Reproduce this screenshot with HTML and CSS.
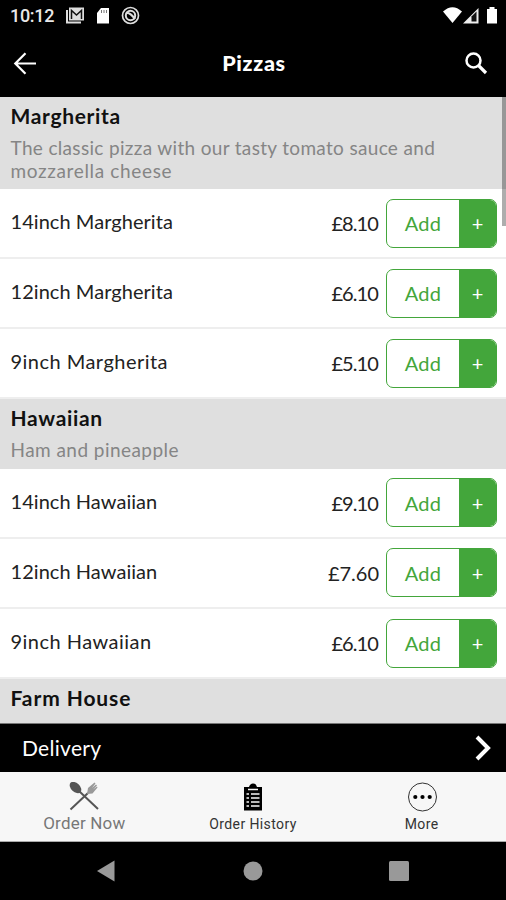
FILE: index.html
```html
<!DOCTYPE html>
<html lang="en">
<head>
<meta charset="utf-8">
<title>Pizzas</title>
<link rel="stylesheet" href="styles.css">
</head>
<body>
<div class="app">
  <div class="status">
    <span class="clock">10:12</span>
    <svg class="notices" width="76" height="20" viewBox="0 0 76 20">
      <path d="M2 4v12.500h14" fill="none" stroke="#ddd" stroke-width="2"/>
      <path d="M4 1.500h15v13H4z" fill="#ddd"/>
      <path d="M6.500 13V4.500l5 4.500 5-4.500V13" fill="none" stroke="#111" stroke-width="1.500"/>
      <path d="M36 2h8v15.500H32V7z" fill="#fff"/>
      <path d="M36.500 4v3M39 4v3M41.500 4v3" stroke="#777" stroke-width="1"/>
      <circle cx="65.500" cy="9.500" r="8" fill="none" stroke="#ddd" stroke-width="1.700"/>
      <circle cx="65.500" cy="9.500" r="4.700" fill="none" stroke="#ddd" stroke-width="2"/>
      <path d="M61 7q4-1 9 6" fill="none" stroke="#ddd" stroke-width="2.200"/>
    </svg>
    <svg class="signals" width="56" height="20" viewBox="0 0 56 20">
      <path d="M0 5.500Q9.500-3 19 5.500L9.500 17z" fill="#fff"/>
      <path d="M20 17.500L35.500 2v15.500z" fill="#eee"/>
      <path d="M28.500 15.500v-5l5-5v10z" fill="#111"/>
      <path d="M44 3h2.500V1h5v2H54v14.500H44z" fill="#fff"/>
    </svg>
  </div>
  <div class="bar">
    <svg width="24" height="24" viewBox="0 0 24 24" fill="none" stroke="#fff" stroke-width="2.200"><path d="M23 12.500H2M12.500 2.300L2.300 12.500l10.200 10.200"/></svg>
    <h1 class="title">Pizzas</h1>
    <svg width="24" height="24" viewBox="0 0 24 24" fill="none" stroke="#fff"><circle cx="9.500" cy="9.500" r="7" stroke-width="2.500"/><path d="M14.500 14.500l7.500 7.500" stroke-width="3.200"/></svg>
  </div>
  <div class="menu">
    <div class="group tall"><h2>Margherita</h2><p><span class="snug">The classic pizza with our tasty tomato sauce and</span><br><span class="loose">mozzarella cheese</span></p></div>
    <div class="row"><span class="name">14inch Margherita</span><span class="price">£8.10</span><div class="button"><span class="add">Add</span><span class="plus">+</span></div></div>
    <div class="row"><span class="name">12inch Margherita</span><span class="price">£6.10</span><div class="button"><span class="add">Add</span><span class="plus">+</span></div></div>
    <div class="row"><span class="name single">9inch Margherita</span><span class="price">£5.10</span><div class="button"><span class="add">Add</span><span class="plus">+</span></div></div>
    <div class="group"><h2>Hawaiian</h2><p>Ham and pineapple</p></div>
    <div class="row"><span class="name">14inch Hawaiian</span><span class="price">£9.10</span><div class="button"><span class="add">Add</span><span class="plus">+</span></div></div>
    <div class="row"><span class="name">12inch Hawaiian</span><span class="price wide">£7.60</span><div class="button"><span class="add">Add</span><span class="plus">+</span></div></div>
    <div class="row"><span class="name single">9inch Hawaiian</span><span class="price">£6.10</span><div class="button"><span class="add">Add</span><span class="plus">+</span></div></div>
    <div class="group"><h2 class="airy">Farm House</h2></div>
    <div class="scroll"></div>
  </div>
  <div class="delivery"><span>Delivery</span><svg width="18" height="26" viewBox="0 0 18 26" fill="none" stroke="#fff" stroke-width="4"><path d="M3 2l11 11L3 24"/></svg></div>
  <div class="tabs">
    <div class="tab now">
      <svg width="30" height="30" viewBox="0 0 30 30"><path d="M10 9l19 18M19 11L1.500 27.500" stroke="#555" stroke-width="2"/><ellipse cx="6.500" cy="5.500" rx="6.800" ry="4.400" transform="rotate(43 6.500 5.500)" fill="#555"/><path d="M18 12l1-6 6.500-5.500 1 1-3.500 4.500 4-3.500 1 1-4 4 4-3 .5 1-5 6z" fill="#999"/></svg>
      <span>Order Now</span>
    </div>
    <div class="tab">
      <svg width="30" height="30" viewBox="0 0 30 30"><path d="M6 5h5q1-3.500 4-3.500t4 3.500h5v23.500H6z" fill="#000"/><path d="M10 7.500h10M8.500 12H11M13 12h8.500M8.500 16H11M13 16h8.500M8.500 20H11M13 20h8.500M8.500 24H11M13 24h8.500" stroke="#f7f7f7" stroke-width="1.500"/></svg>
      <span>Order History</span>
    </div>
    <div class="tab">
      <svg width="30" height="30" viewBox="0 0 30 30"><circle cx="15.500" cy="15" r="14" fill="none" stroke="#333"/><circle cx="8.300" cy="15" r="2.100"/><circle cx="15.500" cy="15" r="2.100"/><circle cx="22.700" cy="15" r="2.100"/></svg>
      <span>More</span>
    </div>
  </div>
  <div class="nav">
    <svg width="20" height="22" viewBox="0 0 20 22"><path d="M1 11L18.500.5v21z" fill="#999"/></svg>
    <svg width="20" height="20" viewBox="0 0 20 20"><circle cx="10" cy="10" r="9.500" fill="#999"/></svg>
    <svg width="20" height="20" viewBox="0 0 20 20"><rect width="20" height="20" rx="1.500" fill="#999"/></svg>
  </div>
</div>
</body>
</html>
```

FILE: styles.css
```css
* { box-sizing: border-box; }
body { margin: 0; background: #000; }
.app { width: 506px; height: 900px; display: flex; flex-direction: column; overflow: hidden; font-family: Lato, "Liberation Sans", sans-serif; }
svg { display: block; flex: none; }
.status { height: 32px; display: flex; align-items: flex-start; padding: 6px 8px 0 10px; color: #e8e8e8; }
.clock { width: 55px; font: 500 18px/20px Roboto, sans-serif; letter-spacing: -.3px; }
.signals { margin-left: auto; margin-right: -1px; }
.bar { height: 65px; display: flex; align-items: center; justify-content: space-between; padding: 0 18px 3px 13px; color: #fff; }
.title { margin: 0; padding-left: 7px; font-size: 21.500px; font-weight: 900; letter-spacing: .7px; }
.menu { height: 627px; position: relative; overflow: hidden; background: #fff; border-bottom: 1px solid #777; }
.group { height: 69.500px; background: #dfdfdf; padding: 7px 10.500px 0; }
.tall { height: 92px; }
h2 { margin: 0; font-size: 21px; line-height: 24px; font-weight: 700; color: #111; letter-spacing: .65px; }
.airy { letter-spacing: .9px; }
p { margin: 8px 0 0; font-size: 19px; line-height: 23px; color: #858585; white-space: nowrap; letter-spacing: .45px; }
.snug { letter-spacing: .33px; }
.loose { letter-spacing: .65px; }
.row { height: 70.100px; border-bottom: 2px solid #eee; display: flex; align-items: center; padding: 0 9px 0 10.500px; color: #222; font-size: 20px; }
.name { flex: 1; letter-spacing: .05px; padding-bottom: 4px; }
.single { letter-spacing: .47px; }
.price { margin-right: 7px; letter-spacing: -.9px; }
.wide { letter-spacing: 0; }
.price:not(.wide) { padding-right: 1px; }
.button { width: 111px; height: 49px; border: 1px solid #43a63b; border-radius: 7px; display: flex; overflow: hidden; color: #43a63b; }
.add, .plus { display: flex; align-items: center; justify-content: center; }
.add { flex: 1; letter-spacing: .3px; }
.plus { width: 37px; background: #43a63b; color: #fff; }
.scroll { position: absolute; top: 0; right: 0; width: 4px; height: 129px; background: rgba(0,0,0,.32); }
.delivery { height: 48px; background: #000; color: #fff; display: flex; align-items: center; justify-content: space-between; padding: 0 14px 0 22px; font-size: 21px; letter-spacing: .3px; }
.delivery span { padding-bottom: 2px; }
.tabs { height: 70px; background: #f7f7f7; display: grid; grid-template-columns: 1fr 1fr 1fr; border-bottom: 1px solid #aaa; }
.tab { display: flex; flex-direction: column; align-items: center; padding-top: 10px; color: #333; font: 14px/18px Roboto, sans-serif; letter-spacing: .4px; }
.tab span { margin-top: 3px; }
.now { color: #777; font-size: 17px; letter-spacing: .2px; }
.now span { margin-top: 2px; }
.nav { height: 58px; display: flex; align-items: center; justify-content: space-between; padding: 0 97px 0 96px; }
```
